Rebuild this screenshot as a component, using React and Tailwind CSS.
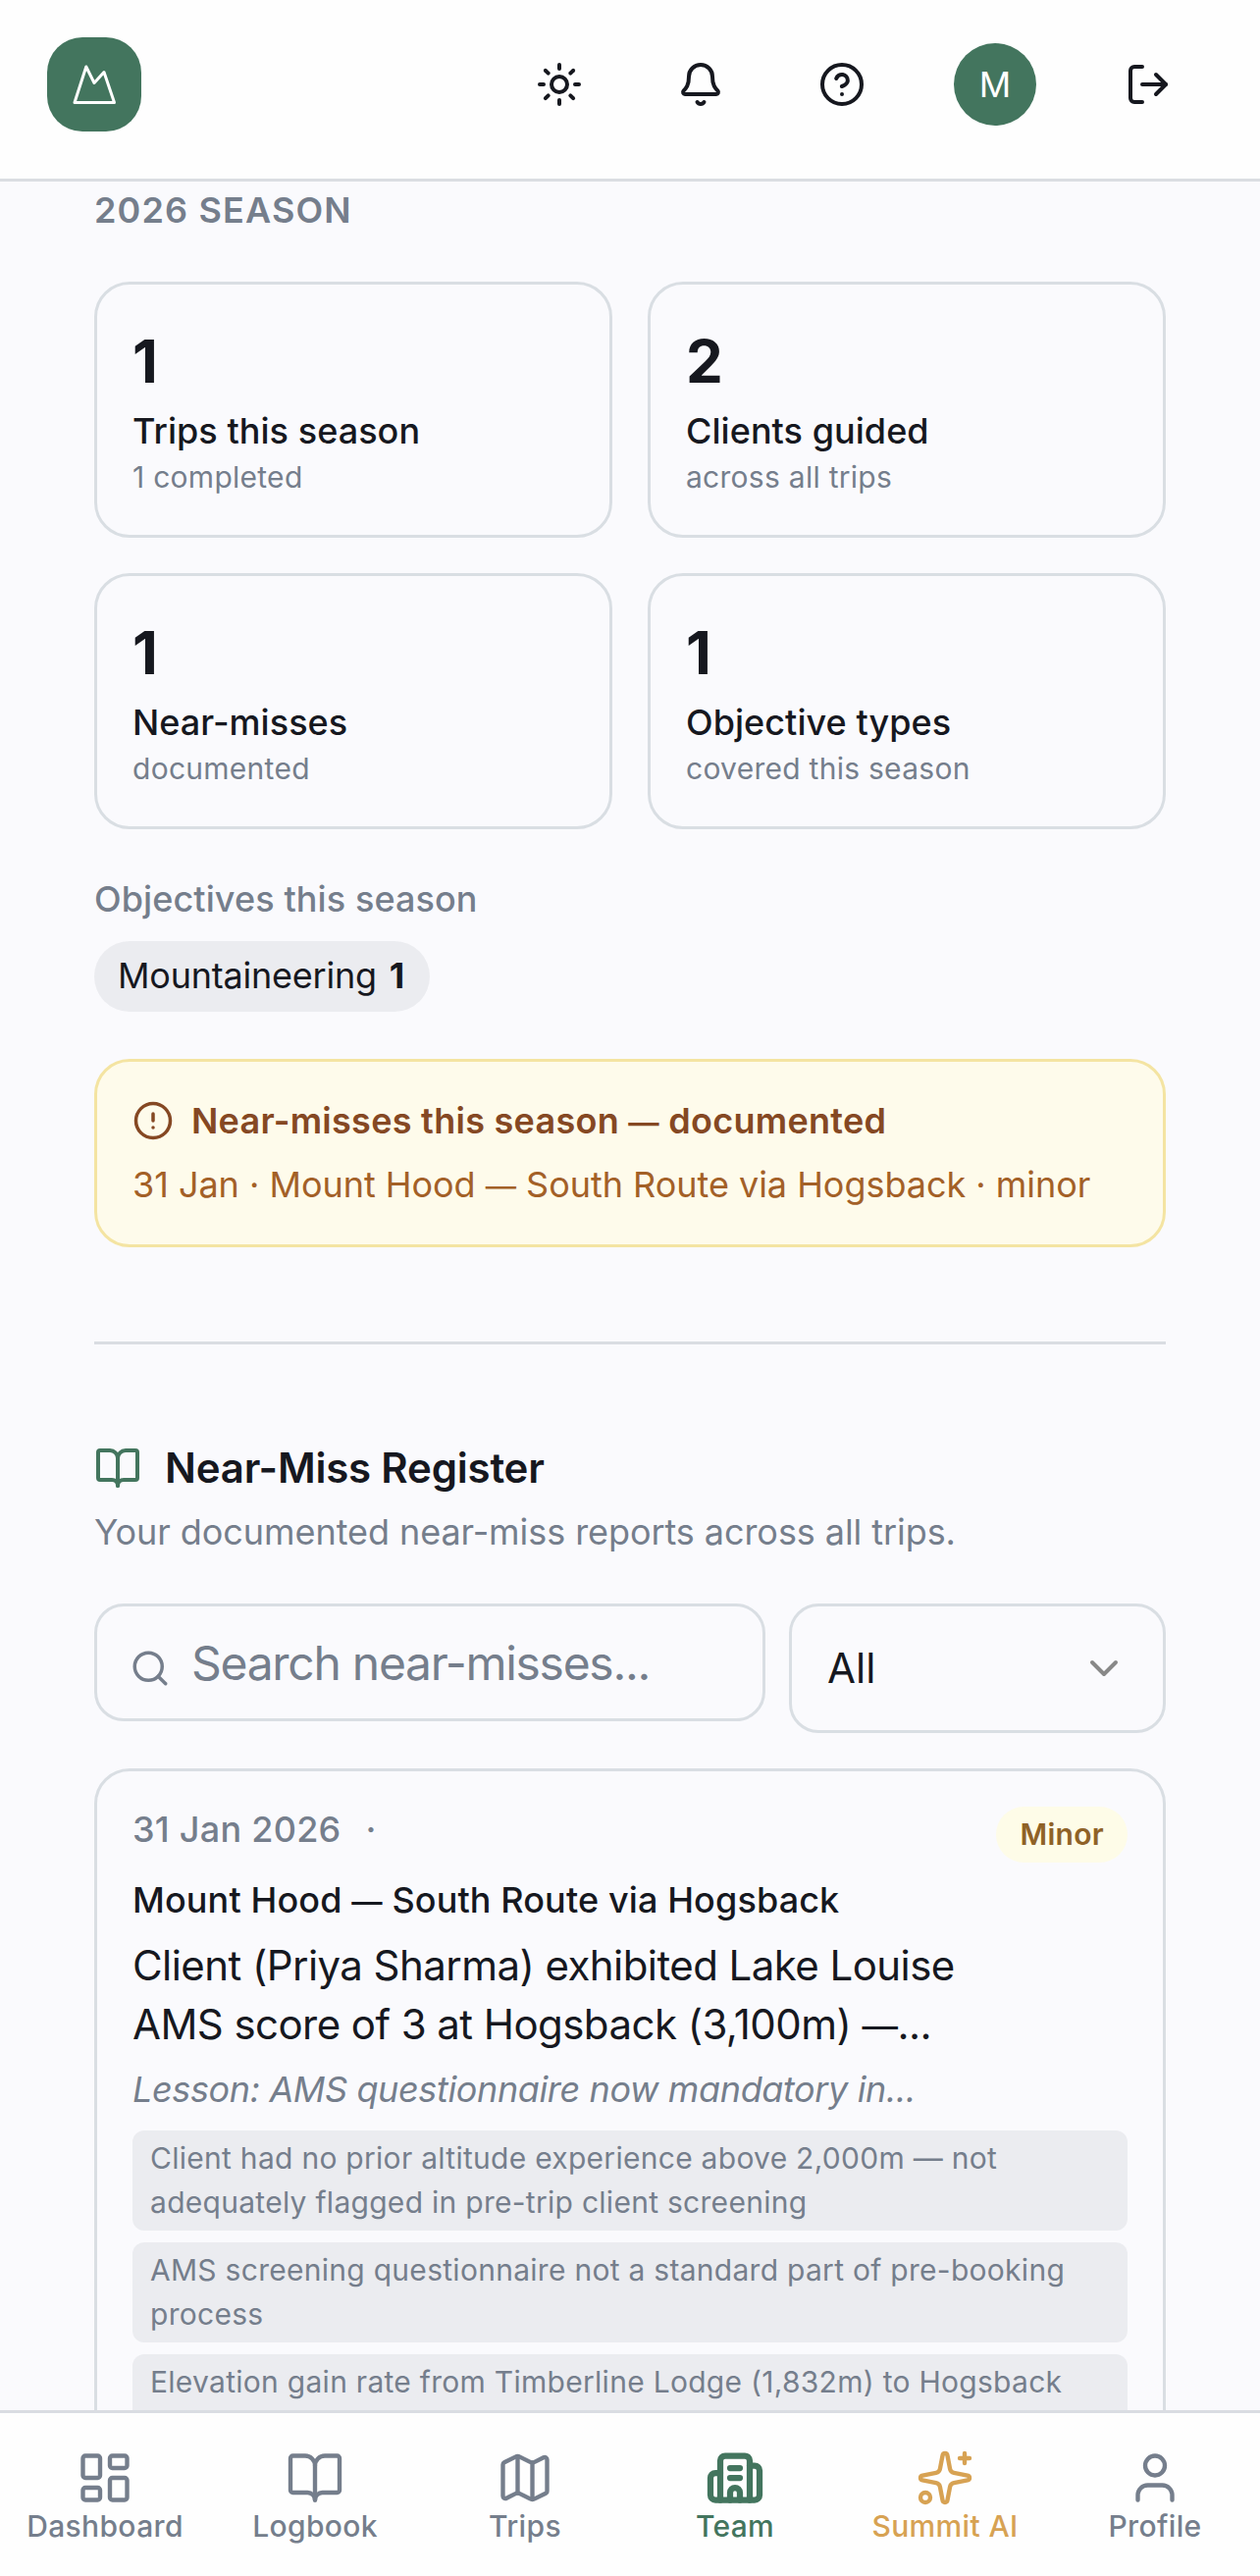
import React from 'react';
import {
  BellIcon,
  BookOpen,
  Building2,
  ChevronDown,
  CircleAlert,
  CircleQuestionMark,
  LayoutDashboard,
  LogOut,
  Map,
  Search,
  Sparkles,
  Sun,
  User,
} from 'lucide-react';

const stats = [
  { value: '1', label: 'Trips this season', note: '1 completed' },
  { value: '2', label: 'Clients guided', note: 'across all trips' },
  { value: '1', label: 'Near-misses', note: 'documented' },
  { value: '1', label: 'Objective types', note: 'covered this season' },
];

const factors = [
  'Client had no prior altitude experience above 2,000m — not adequately flagged in pre-trip client screening',
  'AMS screening questionnaire not a standard part of pre-booking process',
  'Elevation gain rate from Timberline Lodge (1,832m) to Hogsback',
];

const navItems = [
  { label: 'Dashboard', icon: LayoutDashboard },
  { label: 'Logbook', icon: BookOpen },
  { label: 'Trips', icon: Map },
  { label: 'Team', icon: Building2, active: true },
  { label: 'Summit AI', icon: Sparkles, accent: true },
  { label: 'Profile', icon: User },
];

// Slightly shorter em dash than the font's own
const Dash = () => <span className="text-[0.87em] leading-none">—</span>;

const Header = () => (
  <header className="flex h-[185px] shrink-0 items-center justify-between border-b-[3px] border-[#dadde2] bg-[#fefefe] pt-[4px] pr-[54px] pb-[14px] pl-12">
    <div className="flex size-24 items-center justify-center rounded-[36px] bg-[#43755e]">
      <svg viewBox="0 0 48 48" className="size-12" fill="none" stroke="white" strokeWidth="3" strokeLinejoin="round">
        <path d="M4 42.5 15.8 6 24 22.5 34 11.5 44.5 42.5Z" />
      </svg>
    </div>
    <div className="flex items-center gap-6">
      <button className="flex size-[120px] items-center justify-center"><Sun size={48} /></button>
      <button className="flex size-[120px] items-center justify-center"><BellIcon size={48} /></button>
      <button className="flex size-[120px] items-center justify-center"><CircleQuestionMark size={48} /></button>
      <button className="flex w-36 items-center justify-center">
        <span className="flex size-[84px] items-center justify-center rounded-full bg-[#43755e] text-[36px] leading-none text-white">M</span>
      </button>
      <button className="flex size-[120px] items-center justify-center"><LogOut size={48} /></button>
    </div>
  </header>
);

const StatCard = ({ value, label, note }) => (
  <div className="rounded-[36px] border-[3px] border-[#d9dee3] p-9">
    <p className="text-[60px] leading-[84px] font-bold">{value}</p>
    <p className="mt-[5px] mb-px text-[36px] leading-[48px] font-medium tracking-[0.05px]">{label}</p>
    <p className="text-[30px] leading-[45px] tracking-[0.27px] text-[#757e8c]">{note}</p>
  </div>
);

const SeasonSummary = () => (
  <section>
    <h2 className="text-[36px] leading-[48px] font-semibold tracking-[1.15px] text-[#757e8c]">2026 SEASON</h2>
    <div className="mt-[49px] grid grid-cols-2 gap-9">
      {stats.map((s) => (
        <StatCard key={s.label} {...s} />
      ))}
    </div>
    <p className="mt-[47px] text-[36px] leading-[48px] font-medium tracking-[0.1px] text-[#757e8c]">Objectives this season</p>
    <div className="mt-[19px] flex">
      <span className="rounded-full bg-[#ebecf0] pt-[11px] pr-[26px] pb-[13px] pl-6 text-[36px] leading-[48px] tracking-[-0.22px]">
        Mountaineering <span className="ml-[3px] font-bold">1</span>
      </span>
    </div>
    <div className="mt-12 rounded-[36px] border-[3px] border-[#f4e4a2] bg-[#fefbeb] p-9">
      <div className="flex h-12 items-center gap-[18px] text-[#854823]">
        <CircleAlert size={42} />
        <p className="mb-px text-[36px] leading-[48px] font-semibold tracking-[0.27px] whitespace-nowrap">
          Near-misses this season <Dash /> documented
        </p>
      </div>
      <p className="mt-[17px] mb-px text-[36px] leading-[48px] tracking-[-0.03px] whitespace-nowrap text-[#a36027]">
        31 Jan · Mount Hood <Dash /> South Route via Hogsback · minor
      </p>
    </div>
  </section>
);

const ReportCard = () => (
  <article className="mt-9 rounded-[36px] border-[3px] border-[#d9dee3] p-9">
    <div className="-mt-px flex items-start justify-between">
      <p className="flex items-center gap-[25px] text-[36px] leading-[48px] font-medium tracking-[0.25px] text-[#757e8c]">
        <span>31 Jan 2026</span>
        <span>·</span>
      </p>
      <span className="mt-px -mb-12 rounded-full bg-[#fefce8] px-6 py-1.5 text-[30px] leading-[45px] font-semibold tracking-[0.3px] text-[#8f6227]">Minor</span>
    </div>
    <h3 className="mt-6 mb-[13px] text-[36px] leading-[48px] font-medium tracking-[0.12px] whitespace-nowrap">
      Mount Hood <Dash /> South Route via Hogsback
    </h3>
    <p className="text-[42px] leading-[60px] tracking-[-0.56px] whitespace-nowrap">
      Client (Priya Sharma) exhibited Lake Louise
      <br />
      AMS score of 3 at Hogsback (3,100m) <Dash />...
    </p>
    <p className="mt-3 text-[36px] leading-[48px] tracking-[-0.38px] text-[#757e8c] italic">Lesson: AMS questionnaire now mandatory in...</p>
    <div className="mt-[18px] flex flex-col gap-3">
      {factors.map((factor) => (
        <span
          key={factor}
          className="min-h-[102px] rounded-xl bg-[#ebecf0] px-[18px] py-1.5 text-[30px] leading-[45px] tracking-[0.28px] text-[#757e8c]"
        >
          {factor}
        </span>
      ))}
    </div>
  </article>
);

const NearMissRegister = () => (
  <section className="mt-24 border-t-[3px] border-[#dadde2] pt-24">
    <div className="flex items-center gap-6">
      <BookOpen size={48} className="text-[#43755e]" />
      <h2 className="text-[42px] leading-[60px] font-semibold tracking-[-0.2px]">Near-Miss Register</h2>
    </div>
    <p className="mt-[11px] text-[36px] leading-[48px] tracking-[-0.07px] text-[#757e8c]">Your documented near-miss reports across all trips.</p>
    <div className="mt-[49px] flex items-start gap-6">
      <div className="flex h-[120px] flex-1 items-center rounded-[30px] border-[3px] border-[#d9dee3] pl-[33px]">
        <Search size={42} className="mt-3 text-[#757e8c]" />
        <span className="mt-0.5 ml-[21px] text-[48px] leading-[72px] tracking-[-1.28px] text-[#757e8c]">Search near-misses...</span>
      </div>
      <div className="flex h-[132px] w-[384px] items-center justify-between rounded-[30px] border-[3px] border-[#d9dee3] px-9">
        <span className="text-[42px] leading-[60px]">All</span>
        <ChevronDown size={48} className="text-[#888888]" />
      </div>
    </div>
    <ReportCard />
  </section>
);

const BottomNav = () => (
  <nav className="grid h-[169px] shrink-0 grid-cols-6 border-t-[3px] border-[#dadde2] bg-[#fefefe] pt-9">
    {navItems.map(({ label, icon: Icon, active, accent }) => {
      const color = active ? 'text-[#43755e]' : accent ? 'text-[#d7a253]' : 'text-[#757e8c]';
      return (
        <a key={label} className={`flex flex-col items-center ${color}`}>
          <Icon size={60} strokeWidth={active ? 2.5 : 1.75} />
          <span className="text-[30px] leading-[38px] font-medium tracking-[0.35px] whitespace-nowrap">{label}</span>
        </a>
      );
    })}
  </nav>
);

const App = () => {
  return (
    <div className="flex h-[2625px] w-[1284px] flex-col overflow-hidden bg-[#fafafd] font-['Inter',sans-serif] text-[#16181f]">
      <Header />
      <main className="min-h-0 flex-1 overflow-hidden px-24 pt-[5px]">
        <SeasonSummary />
        <NearMissRegister />
      </main>
      <BottomNav />
    </div>
  );
};

export default App;
